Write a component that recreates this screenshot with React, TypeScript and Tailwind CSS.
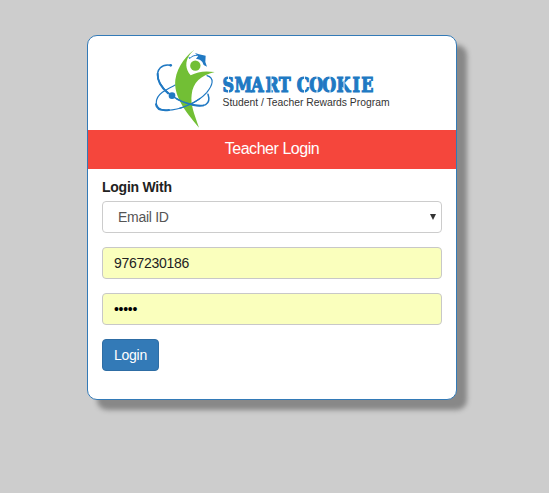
function Logo() {
  return (
    <svg viewBox="0 0 250 86" className="block h-[86px] w-[250px]" role="img" aria-label="Smart Cookie">
      <g transform="scale(0.33333)">
        <g fill="none" stroke="#2079c3" strokeLinecap="round">
          <path d="M62 61C36 55 18 74 24 100C30 126 54 146 84 164C112 180 151 188 167 179C178 173 178 160 174 148" strokeWidth="4.5" />
          <path d="M171 92C195 99 188 121 170 143C142 174 83 200 42 195C10 191 14 159 37 142C50 132 66 125 76 120" strokeWidth="3.5" />
          <path d="M23 86C22 108 35 129 54 145M18 178C20 194 39 197 57 195" strokeWidth="6" />
        </g>
        <path d="M138 11C112 27 82 62 76 104C71 151 101 193 147 248C132 205 121 177 125 149C129 112 152 91 194 81C163 77 143 80 122 91C106 74 105 50 118 31C124 22 131 16 138 11Z" fill="#72bf35" />
        <path d="M78 160C101 175 137 184 162 181" fill="none" stroke="#2079c3" strokeWidth="5" />
        <path d="M88 190C110 184 132 174 151 160" fill="none" stroke="#2079c3" strokeWidth="4" />
        <circle cx="136" cy="62" r="15.5" fill="#72bf35" />
        <circle cx="66" cy="152" r="10" fill="#2079c3" />
        <circle cx="62" cy="61" r="4" fill="#2079c3" />
        <path d="M135 24L147 28L167 32L166 51L171 65L161 60L157 51C152 45 147 42 138 41L144 34Z" fill="#2079c3" />
        <path d="M142 31C133 31 125 33 119 41L117 36" fill="none" stroke="#2079c3" strokeWidth="3" />
      </g>
      <text
        transform="scale(0.82 1)"
        y="47"
        x="88.500 103 123.500 141 157 170 179 194.300 210.200 227.500 247 257.500"
        fill="#2079c3"
        stroke="#2079c3"
        strokeWidth="1.1"
        className="font-['DejaVu_Serif',serif] text-[19.5px] font-bold"
      >
        SMART COOKIE
      </text>
      <path
        d="M78.500 31V35M78.500 44V48M121 31V48M154.500 31V35M154.500 43V48M167 31V35M167 43V48M180 31V35M180 43V48M194 31V48"
        stroke="#fff"
        strokeWidth="0.9"
      />
      <text x="72.500" y="60.500" textLength="167" lengthAdjust="spacingAndGlyphs" fill="#333" className="font-['Liberation_Sans',sans-serif] text-[11px]">
        Student / Teacher Rewards Program
      </text>
    </svg>
  );
}

export default function App() {
  return (
    <main className="flex h-[493px] w-full items-start bg-[#cdcdcd] pl-[87px] pt-[35px] font-['Liberation_Sans',Arial,sans-serif] text-[14px] tracking-[-0.28px] text-[#333]">
      <section className="h-[365px] w-[370px] overflow-hidden rounded-[10px] border border-[#337ab7] bg-white shadow-[10px_10px_5px_#888]">
        <header className="h-[94px] pl-[62px] pt-[9px] tracking-normal">
          <Logo />
        </header>
        <h1 className="h-[39px] bg-[#f5463c] text-center text-[16px] leading-[38px] tracking-[-0.45px] text-white">Teacher Login</h1>
        <form className="flex flex-col px-[14px] pt-[10px]" onSubmit={(e) => e.preventDefault()}>
          <label htmlFor="method" className="h-[22px] leading-[17px] font-bold tracking-[-0.25px] text-[#222]">Login With</label>
          <button id="method" type="button" className="flex h-8 items-center justify-between rounded border border-[#ccc] bg-white pl-[15px] pr-[5px] text-[#555]">
            <span>Email ID</span>
            <svg viewBox="0 0 6 6" className="size-1.5 fill-[#333]"><path d="M0 0H6L3 6Z" /></svg>
          </button>
          <input aria-label="Email ID" defaultValue="9767230186" className="mt-3.5 h-8 rounded border border-[#c8c8c8] bg-[#faffbd] px-[11px] text-[#222] outline-none" />
          <input aria-label="Password" type="password" defaultValue="12345" className="mt-3.5 h-8 rounded border border-[#c8c8c8] bg-[#faffbd] px-[11px] text-black outline-none" />
          <button type="submit" className="mt-3.5 h-8 w-[57px] rounded border border-[#2e6da4] bg-[#337ab7] text-white">Login</button>
        </form>
      </section>
    </main>
  );
}
